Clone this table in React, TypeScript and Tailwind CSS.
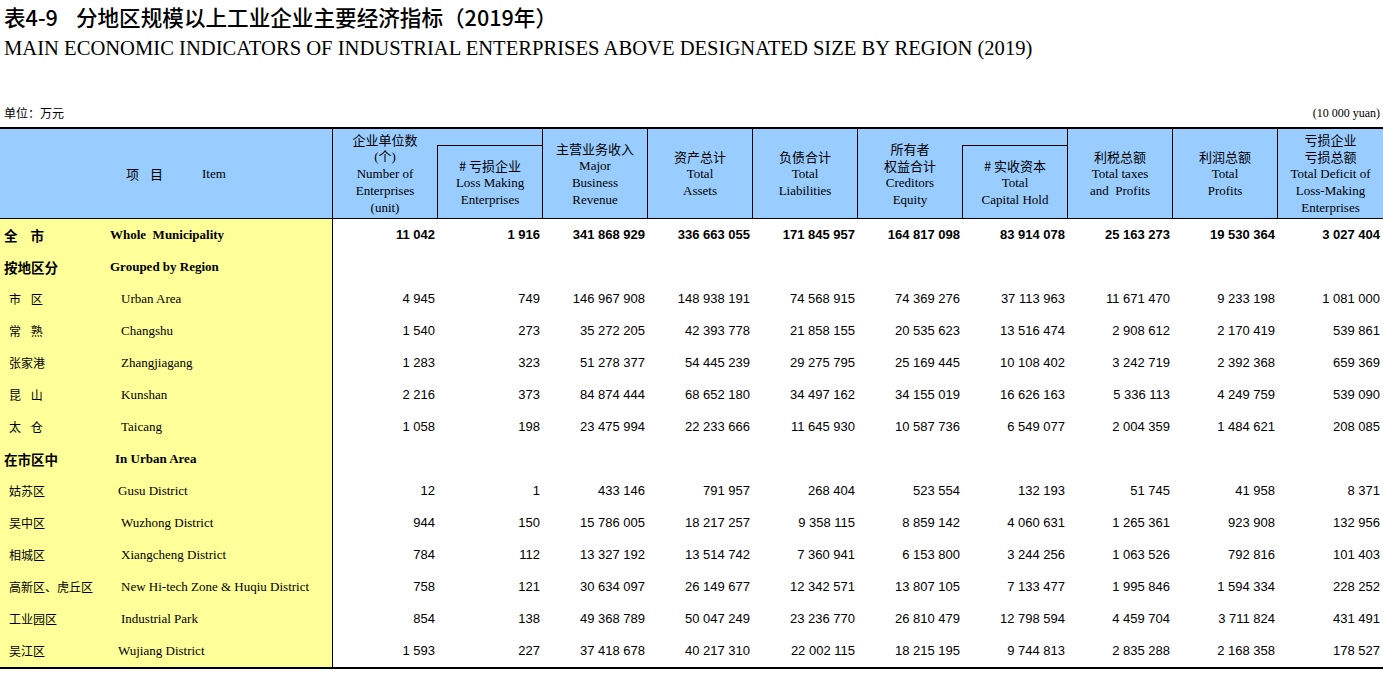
const cn = { fontFamily: '"Noto Sans CJK SC", "Noto Sans", sans-serif' };
const serif = { fontFamily: '"Liberation Serif", "Noto Sans CJK SC", serif' };
const num = { fontFamily: '"Liberation Sans", Arial, sans-serif' };

type Row = { cn: string; en: string; bold?: boolean; cnCls: string; enPad: string; v: string[] };

const B = "pl-[4px] text-[13.5px] font-bold";
const N = "pl-[9px] text-[12px]";

const rows: Row[] = [
  { cn: "全 市", en: "Whole  Municipality", bold: true, cnCls: `${B} [word-spacing:10px]`, enPad: "pl-0", v: ["11 042", "1 916", "341 868 929", "336 663 055", "171 845 957", "164 817 098", "83 914 078", "25 163 273", "19 530 364", "3 027 404"] },
  { cn: "按地区分", en: "Grouped by Region", bold: true, cnCls: B, enPad: "pl-0", v: [] },
  { cn: "市 区", en: "Urban Area", cnCls: `${N} [word-spacing:7px]`, enPad: "pl-[11px]", v: ["4 945", "749", "146 967 908", "148 938 191", "74 568 915", "74 369 276", "37 113 963", "11 671 470", "9 233 198", "1 081 000"] },
  { cn: "常 熟", en: "Changshu", cnCls: `${N} [word-spacing:7px]`, enPad: "pl-[11px]", v: ["1 540", "273", "35 272 205", "42 393 778", "21 858 155", "20 535 623", "13 516 474", "2 908 612", "2 170 419", "539 861"] },
  { cn: "张家港", en: "Zhangjiagang", cnCls: N, enPad: "pl-[11px]", v: ["1 283", "323", "51 278 377", "54 445 239", "29 275 795", "25 169 445", "10 108 402", "3 242 719", "2 392 368", "659 369"] },
  { cn: "昆 山", en: "Kunshan", cnCls: `${N} [word-spacing:7px]`, enPad: "pl-[11px]", v: ["2 216", "373", "84 874 444", "68 652 180", "34 497 162", "34 155 019", "16 626 163", "5 336 113", "4 249 759", "539 090"] },
  { cn: "太 仓", en: "Taicang", cnCls: `${N} [word-spacing:7px]`, enPad: "pl-[11px]", v: ["1 058", "198", "23 475 994", "22 233 666", "11 645 930", "10 587 736", "6 549 077", "2 004 359", "1 484 621", "208 085"] },
  { cn: "在市区中", en: "In Urban Area", bold: true, cnCls: B, enPad: "pl-[5px]", v: [] },
  { cn: "姑苏区", en: "Gusu District", cnCls: N, enPad: "pl-[8px]", v: ["12", "1", "433 146", "791 957", "268 404", "523 554", "132 193", "51 745", "41 958", "8 371"] },
  { cn: "吴中区", en: "Wuzhong District", cnCls: N, enPad: "pl-[11px]", v: ["944", "150", "15 786 005", "18 217 257", "9 358 115", "8 859 142", "4 060 631", "1 265 361", "923 908", "132 956"] },
  { cn: "相城区", en: "Xiangcheng District", cnCls: N, enPad: "pl-[11px]", v: ["784", "112", "13 327 192", "13 514 742", "7 360 941", "6 153 800", "3 244 256", "1 063 526", "792 816", "101 403"] },
  { cn: "高新区、虎丘区", en: "New Hi-tech Zone & Huqiu District", cnCls: N, enPad: "pl-[11px]", v: ["758", "121", "30 634 097", "26 149 677", "12 342 571", "13 807 105", "7 133 477", "1 995 846", "1 594 334", "228 252"] },
  { cn: "工业园区", en: "Industrial Park", cnCls: N, enPad: "pl-[11px]", v: ["854", "138", "49 368 789", "50 047 249", "23 236 770", "26 810 479", "12 798 594", "4 459 704", "3 711 824", "431 491"] },
  { cn: "吴江区", en: "Wujiang District", cnCls: N, enPad: "pl-[8px]", v: ["1 593", "227", "37 418 678", "40 217 310", "22 002 115", "18 215 195", "9 744 813", "2 835 288", "2 168 358", "178 527"] },
];

// header lines: c = chinese line, otherwise english
type Line = { t: string; c?: boolean };

const Lines = ({ lines }: { lines: Line[] }) => (
  <div className="flex flex-col items-center text-center">
    {lines.map((l, i) => (
      <div key={i} style={l.c ? cn : serif} className="whitespace-pre">
        {l.t}
      </div>
    ))}
  </div>
);

const Head = ({ lines, last }: { lines: Line[]; last?: boolean }) => (
  <div className={`w-[105px] flex items-center justify-center ${last ? "" : "border-r border-black"}`}>
    <Lines lines={lines} />
  </div>
);

const Group = ({ main, sub }: { main: Line[]; sub: Line[] }) => (
  <div className="w-[210px] flex border-r border-black">
    <div className="w-[104px] flex items-center justify-center">
      <Lines lines={main} />
    </div>
    <div className="w-[105px] pt-[16px] flex flex-col">
      <div className="flex-1 border-t border-l border-black flex items-center justify-center">
        <Lines lines={sub} />
      </div>
    </div>
  </div>
);

export default function App() {
  return (
    <div className="w-[1383px] h-[699px] bg-white text-black overflow-hidden">
      <div className="pl-[4px] pt-[4px]">
        <div style={cn} className="text-[21.6px] leading-[26px] font-medium whitespace-pre">
          <span>表4-9</span>
          <span className="ml-[18px]">分地区规模以上工业企业主要经济指标（2019年）</span>
        </div>
        <div style={serif} className="mt-[6px] text-[20.6px] leading-[24px]">
          MAIN ECONOMIC INDICATORS OF INDUSTRIAL ENTERPRISES ABOVE DESIGNATED SIZE BY REGION (2019)
        </div>
      </div>
      <div className="mt-[45px] flex justify-between items-center h-[16px] pl-[4px] pr-[3px]">
        <span style={cn} className="text-[12px]">单位：万元</span>
        <span style={serif} className="text-[12px]">(10 000 yuan)</span>
      </div>

      <div className="mt-[6px] border-t-2 border-black">
        {/* header */}
        <div className="flex h-[90px] border-b border-black bg-[#99ccff] text-[13px] leading-[17px]">
          <div className="w-[333px] border-r border-black flex items-center pl-[126px]">
            <span style={cn}>项</span>
            <span style={cn} className="ml-[11px]">目</span>
            <span style={serif} className="ml-[39px]">Item</span>
          </div>
          <Group
            main={[{ t: "企业单位数", c: true }, { t: "(个)" }, { t: "Number of" }, { t: "Enterprises" }, { t: "(unit)" }]}
            sub={[{ t: "# 亏损企业", c: true }, { t: "Loss Making" }, { t: "Enterprises" }]}
          />
          <Head lines={[{ t: "主营业务收入", c: true }, { t: "Major" }, { t: "Business" }, { t: "Revenue" }]} />
          <Head lines={[{ t: "资产总计", c: true }, { t: "Total" }, { t: "Assets" }]} />
          <Head lines={[{ t: "负债合计", c: true }, { t: "Total" }, { t: "Liabilities" }]} />
          <Group
            main={[{ t: "所有者", c: true }, { t: "权益合计", c: true }, { t: "Creditors" }, { t: "Equity" }]}
            sub={[{ t: "# 实收资本", c: true }, { t: "Total" }, { t: "Capital Hold" }]}
          />
          <Head lines={[{ t: "利税总额", c: true }, { t: "Total taxes" }, { t: "and  Profits" }]} />
          <Head lines={[{ t: "利润总额", c: true }, { t: "Total" }, { t: "Profits" }]} />
          <Head
            last
            lines={[{ t: "亏损企业", c: true }, { t: "亏损总额", c: true }, { t: "Total Deficit of" }, { t: "Loss-Making" }, { t: "Enterprises" }]}
          />
        </div>

        {/* body */}
        <div className="border-b-2 border-black">
          {rows.map((r) => (
            <div key={r.cn} className="flex h-[32px] text-[13px]">
              <div className="w-[333px] bg-[#ffff99] border-r border-black flex items-center">
                <span style={cn} className={`w-[110px] whitespace-pre ${r.cnCls}`}>
                  {r.cn}
                </span>
                <span style={serif} className={`whitespace-pre ${r.enPad} ${r.bold ? "font-bold" : ""}`}>
                  {r.en}
                </span>
              </div>
              {r.v.map((x, i) => (
                <div
                  key={i}
                  style={num}
                  className={`w-[105px] flex items-center justify-end pr-[3px] ${r.bold ? "font-bold" : ""}`}
                >
                  {x}
                </div>
              ))}
            </div>
          ))}
        </div>
      </div>
    </div>
  );
}
